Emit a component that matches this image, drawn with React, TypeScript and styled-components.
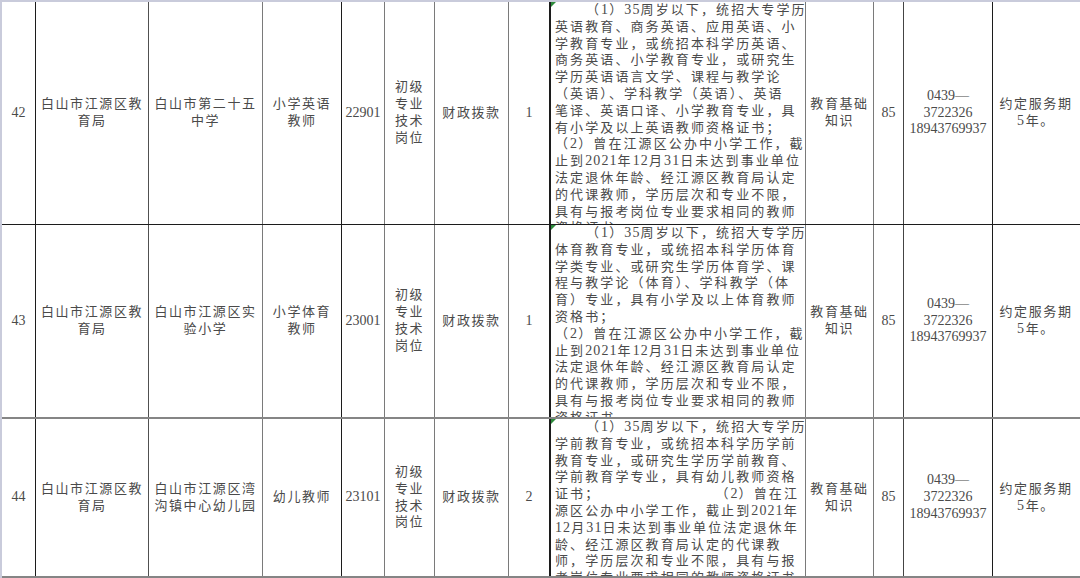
import React from 'react'
import styled, { createGlobalStyle } from 'styled-components'

const GlobalStyle = createGlobalStyle`
  html, body {
    margin: 0;
    padding: 0;
    background: #fff;
  }
  body {
    width: 1080px;
    height: 578px;
    overflow: hidden;
    font-family: 'Liberation Serif', 'Noto Sans CJK SC', serif;
    color: #4a4a4a;
  }
`

// column widths and the colour of each column's right-hand rule
const widths = [34, 113, 114, 79, 43, 50, 74, 41, 256, 68, 30, 89]
const edges = [
  '#1c1c1c', '#505050', '#7a7a7a', '#1c1c1c', '#7a7a7a', '#7a7a7a',
  '#7a7a7a', '#1c1c1c', '#7a7a7a', '#7a7a7a', '#444', '#1c1c1c', 'transparent'
]

type ReqLine = string | [string, string]

type Post = {
  no: string
  dept: string[]
  unit: string[]
  title: string[]
  code: string
  count: string
  req: ReqLine[]
  height: number
  rule: string
}

const posts: Post[] = [
  {
    no: '42',
    dept: ['白山市江源区教', '育局'],
    unit: ['白山市第二十五', '中学'],
    title: ['小学英语', '教师'],
    code: '22901',
    count: '1',
    height: 223,
    rule: '1px solid #1c1c1c',
    req: [
      '（1）35周岁以下，统招大专学历',
      '英语教育、商务英语、应用英语、小',
      '学教育专业，或统招本科学历英语、',
      '商务英语、小学教育专业，或研究生',
      '学历英语语言文学、课程与教学论',
      '（英语）、学科教学（英语）、英语',
      '笔译、英语口译、小学教育专业，具',
      '有小学及以上英语教师资格证书；',
      '（2）曾在江源区公办中小学工作，截',
      '止到2021年12月31日未达到事业单位',
      '法定退休年龄、经江源区教育局认定',
      '的代课教师，学历层次和专业不限，',
      '具有与报考岗位专业要求相同的教师',
      '资格证书。'
    ]
  },
  {
    no: '43',
    dept: ['白山市江源区教', '育局'],
    unit: ['白山市江源区实', '验小学'],
    title: ['小学体育', '教师'],
    code: '23001',
    count: '1',
    height: 194,
    rule: '2px solid #858585',
    req: [
      '（1）35周岁以下，统招大专学历',
      '体育教育专业，或统招本科学历体育',
      '学类专业、或研究生学历体育学、课',
      '程与教学论（体育）、学科教学（体',
      '育）专业，具有小学及以上体育教师',
      '资格书；',
      '（2）曾在江源区公办中小学工作，截',
      '止到2021年12月31日未达到事业单位',
      '法定退休年龄、经江源区教育局认定',
      '的代课教师，学历层次和专业不限，',
      '具有与报考岗位专业要求相同的教师',
      '资格证书。'
    ]
  },
  {
    no: '44',
    dept: ['白山市江源区教', '育局'],
    unit: ['白山市江源区湾', '沟镇中心幼儿园'],
    title: ['幼儿教师'],
    code: '23101',
    count: '2',
    height: 159,
    rule: '2px solid #858585',
    req: [
      '（1）35周岁以下，统招大专学历',
      '学前教育专业，或统招本科学历学前',
      '教育专业，或研究生学历学前教育、',
      '学前教育学专业，具有幼儿教师资格',
      ['证书；', '（2）曾在江'],
      '源区公办中小学工作，截止到2021年',
      '12月31日未达到事业单位法定退休年',
      '龄、经江源区教育局认定的代课教',
      '师，学历层次和专业不限，具有与报',
      '考岗位专业要求相同的教师资格证书'
    ]
  }
]

// digits are set a size up from the CJK text, as the sheet's font does
const withDigits = (text: string) =>
  text.split(/(\d+)/).map((part, i) =>
    /^\d+$/.test(part) ? <Num key={i}>{part}</Num> : part
  )

const App = () => {
  return (
    <>
      <GlobalStyle />
      <Sheet>
        {posts.map(post => (
          <Row key={post.no} $height={post.height} $rule={post.rule}>
            <Cell $edge={edges[0]} $digits>{post.no}</Cell>
            <Cell $edge={edges[1]}>
              <Lines lines={post.dept} />
            </Cell>
            <Cell $edge={edges[2]}>
              <Lines lines={post.unit} />
            </Cell>
            <Cell $edge={edges[3]}>
              <Lines lines={post.title} />
            </Cell>
            <Cell $edge={edges[4]} $digits>{post.code}</Cell>
            <Cell $edge={edges[5]}>
              <Lines lines={['初级', '专业', '技术', '岗位']} />
            </Cell>
            <Cell $edge={edges[6]}>财政拨款</Cell>
            <Cell $edge={edges[7]} $digits>{post.count}</Cell>
            <ReqCell $edge={edges[8]}>
              <Flag />
              {post.req.map((line, i) =>
                typeof line === 'string' ? (
                  <ReqLine key={i} $indent={i === 0}>{withDigits(line)}</ReqLine>
                ) : (
                  <SplitLine key={i}>
                    <span>{withDigits(line[0])}</span>
                    <span>{withDigits(line[1])}</span>
                  </SplitLine>
                )
              )}
            </ReqCell>
            <Cell $edge={edges[9]}>
              <Lines lines={['教育基础', '知识']} />
            </Cell>
            <Cell $edge={edges[10]} $digits>85</Cell>
            <Cell $edge={edges[11]} $digits>
              <Lines lines={['0439—', '3722326', '18943769937']} />
            </Cell>
            <Cell $edge={edges[12]}>
              <Lines lines={['约定服务期', '5年。']} />
            </Cell>
          </Row>
        ))}
      </Sheet>
    </>
  )
}

const Lines = ({ lines }: { lines: string[] }) => (
  <Stack>
    {lines.map((l, i) => (
      <span key={i}>{withDigits(l)}</span>
    ))}
  </Stack>
)

const Sheet = styled.div`
  box-sizing: border-box;
  width: 1080px;
  height: 578px;
  border-top: 2px solid #c9cbdb;
  border-left: 2px solid #c9cbdb;
  display: flex;
  flex-direction: column;
`

const Row = styled.div<{ $height: number; $rule: string }>`
  box-sizing: border-box;
  flex: none;
  display: grid;
  grid-template-columns: ${widths.map(w => `${w}px`).join(' ')} 1fr;
  height: ${p => p.$height}px;
  border-bottom: ${p => p.$rule};
`

const Cell = styled.div<{ $edge: string; $digits?: boolean }>`
  box-sizing: border-box;
  border-right: 1px solid ${p => p.$edge};
  display: flex;
  align-items: center;
  justify-content: center;
  text-align: center;
  font-size: ${p => (p.$digits ? '14px' : '13px')};
  line-height: 16.8px;
  letter-spacing: ${p => (p.$digits ? '0' : '1.6px')};
  white-space: nowrap;
  overflow: hidden;
`

const Stack = styled.div`
  display: flex;
  flex-direction: column;
  align-items: center;
`

const Num = styled.span`
  font-size: 14px;
  letter-spacing: inherit;
`

const ReqCell = styled.div<{ $edge: string }>`
  position: relative;
  box-sizing: border-box;
  border-left: 1px solid #1c1c1c;
  border-right: 1px solid ${p => p.$edge};
  padding: 0 6px 0 4px;
  font-size: 13px;
  line-height: 16.8px;
  letter-spacing: 2.1px;
  white-space: nowrap;
  overflow: hidden;

  ${Num} {
    letter-spacing: 1.1px;
  }
`

const ReqLine = styled.div<{ $indent?: boolean }>`
  height: 16.8px;
  padding-left: ${p => (p.$indent ? '31px' : '0')};
`

const SplitLine = styled.div`
  height: 16.8px;
  display: flex;
  justify-content: space-between;
`

const Flag = styled.span`
  position: absolute;
  top: 0;
  left: 0;
  width: 0;
  height: 0;
  border-top: 5px solid #2e8b3c;
  border-right: 5px solid transparent;
`

export default App
